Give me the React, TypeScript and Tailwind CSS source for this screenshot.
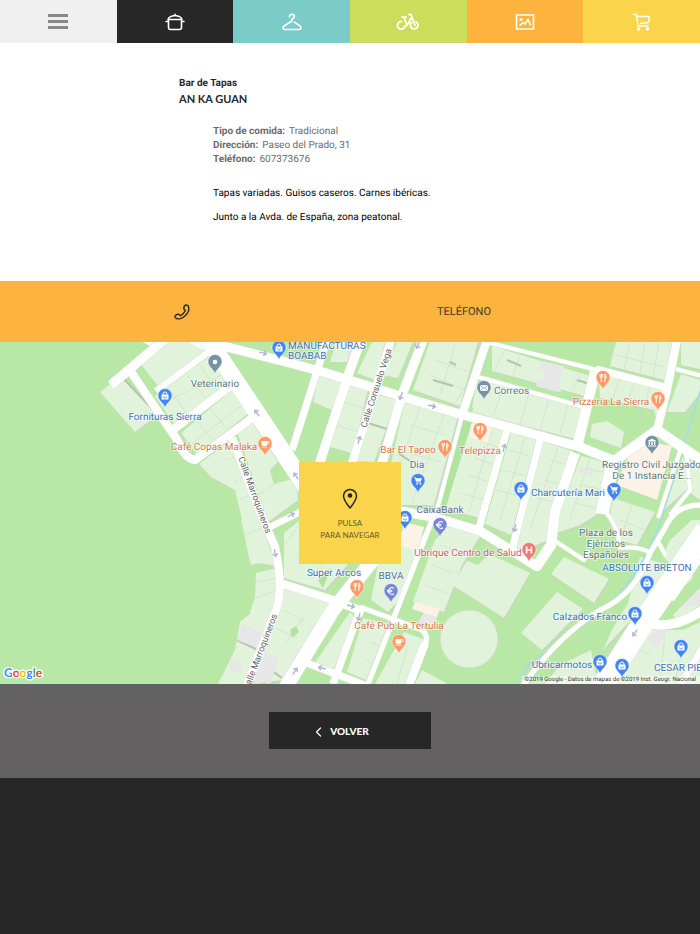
import type { ReactNode } from "react";

type Glyph = "bag" | "cup" | "fork" | "cart" | "mail" | "bank" | "euro" | "h" | "dot";

const BLUE = "#4285f4";
const ORANGE = "#ff9966";
const SLATE = "#7593a3";
const VIOLET = "#7986d8";
const RED = "#f07877";

const blocks: string[] = [
  "100,392 121,376 158,415 135,432",
  "140,363 168,342 193,342 205,352 165,384 158,386",
  "155,396 211,355 228,385 176,427",
  "181,433 232,390 249,413 197,454",
  "199,464 231,440 252,500 262,528 277,566 250,562 241,515 235,490 211,477",
  "237,431 251,421 278,462 270,470 274,484 296,478 298,500 268,522",
  "241,520 258,515 273,560 251,565",
  "256,573 277,568 279,600 262,640 250,612 255,598",
  "284,533 300,520 350,562 325,590 284,578",
  "283,588 330,603 282,680 254,684 278,612",
  "252,612 274,615 246,684 218,684 235,650 240,622",
  "319,375 346,382 332,410 313,402",
  "336,342 354,342 347,362 330,362",
  "372,342 385,342 375,380 357,373",
  "350,384 368,390 352,453 330,447",
  "370,393 397,400 374,462 355,461",
  "397,342 413,342 398,378 382,375",
  "430,342 478,342 460,406 413,390",
  "405,400 458,416 434,505 382,505",
  "492,346 597,378 592,398 492,371",
  "486,376 586,406 575,439 472,412",
  "476,386 486,384 491,410 472,408",
  "599,377 617,374 667,389 658,425 654,410 600,398",
  "616,342 672,342 665,380 610,366",
  "681,374 700,380 700,393 685,412 667,412",
  "681,342 700,342 700,369 681,365",
  "592,424 607,421 624,432 621,448 590,437",
  "472,420 504,431 483,519 445,508",
  "511,433 536,440 511,535 485,524",
  "543,442 573,451 551,512 548,540 517,553 516,540",
  "581,456 611,464 601,512 580,525 557,533 560,512",
  "613,498 655,512 637,545 618,540 610,515",
  "683,457 700,466 700,500 686,490 664,510",
  "452,521 481,535 462,565 444,612 413,602 435,540",
  "452,585 467,561 478,565 489,554 530,573 504,618",
  "404,530 425,536 399,600 388,612 371,600 381,550",
  "363,618 388,624 366,680 347,672",
  "404,632 425,640 410,684 375,684",
  "350,612 357,620 332,672 314,664",
  "551,574 564,557 609,579 594,603",
  "521,633 557,592 583,609 542,650",
  "640,557 676,567 640,610 603,650 612,630 628,603",
  "663,556 670,540 692,520 700,520 700,530 672,567",
  "560,665 591,650 598,684 545,684",
  "652,630 683,630 700,622 700,684 610,684",
  "673,615 700,588 700,605 678,621",
  "422,670 448,684 415,684",
];

const greys = [
  "243,624 262,632 257,648 237,640",
  "260,648 279,658 270,684 250,680",
  "231,659 244,665 240,672 229,669",
  "541,361 551,363 564,366 563,374 559,378 561,392 553,391 536,386 537,380 545,378 546,372 540,370",
  "424,612 437,616 434,628 418,622",
  "648,640 658,625 667,630 656,648",
  "680,608 700,588 700,604",
  "345,342 358,342 355,357 347,356",
  "579,467 593,471 593,476 578,472",
];

const beige = [
  "637,440 672,446 657,500 617,485 622,470",
  "404,522 424,527 417,551 400,546",
  "415,602 440,609 437,617 412,609",
  "471,423 492,428 488,443 470,438",
  "680,574 686,567 693,577 686,585",
];

const roads: { w: number; d: string }[] = [
  { w: 9, d: "M111 385 L165 339" },
  { w: 8, d: "M129 369 L178 441 Q184 458 195 460 L252 418" },
  { w: 8, d: "M174 429 L233 384" },
  { w: 6, d: "M156 391 L210 351" },
  { w: 17, d: "M205 335 L249 401 L318 505" },
  { w: 9, d: "M207 342 L290 363 L323 372 L400 396 L463 415 L490 422 L580 447 L615 461" },
  { w: 10, d: "M613 462 L657 430 L702 461" },
  { w: 8, d: "M657 430 L667 390 L677 340" },
  { w: 7, d: "M327 340 L292 450" },
  { w: 9, d: "M361 340 L350 370 L319 465" },
  { w: 8, d: "M391 340 L350 470" },
  { w: 9, d: "M423 340 L402 395 L380 470" },
  { w: 8, d: "M487 340 L463 412" },
  { w: 4, d: "M463 412 L437 510" },
  { w: 4, d: "M490 343 L597 370 M478 377 L587 408 M676 369 L702 376" },
  { w: 7, d: "M596 369 L668 388" },
  { w: 10, d: "M595 372 L577 447" },
  { w: 7, d: "M507 430 L479 528 M540 440 L512 550" },
  { w: 10, d: "M575 453 L555 512 L551 545 L537 566 L552 543" },
  { w: 13, d: "M613 462 L602 514" },
  { w: 9, d: "M395 510 L433 517 L480 531 L536 566" },
  { w: 5, d: "M432 520 L368 684" },
  { w: 5, d: "M360 607 L417 628 Q430 632 425 645" },
  { w: 8, d: "M425 643 L408 688" },
  { w: 8, d: "M232 438 L260 512 L275 547 Q284 590 276 610 L246 688" },
  { w: 8, d: "M280 583 L333 600 L364 612" },
  { w: 6, d: "M270 527 L300 512" },
  { w: 14, d: "M376 556 L333 610 L284 690" },
  { w: 7, d: "M360 610 L333 684 M307 663 L367 686" },
  { w: 4, d: "M681 448 L658 518 M555 541 L584 560 L588 550" },
  { w: 4, d: "M604 510 Q618 525 620 548 Q640 546 650 553" },
  { w: 5, d: "M700 505 Q675 505 665 528 L650 553 Q635 595 600 610 Q555 638 520 690" },
  { w: 22, d: "M706 530 L645 620 L600 690" },
  { w: 9, d: "M640 622 Q673 632 704 609" },
  { w: 4, d: "M700 560 L672 600 M686 450 L690 490 L670 515 M657 540 L666 556" },
  { w: 6, d: "M702 648 L681 684" },
];

const parcels =
  "M166 385 L190 418 M185 373 L211 405 M200 365 L222 397 M196 420 L219 448 M210 408 L234 438 M165 402 L222 375 M190 445 L243 404 M250 500 L284 478 M226 460 L245 454 M234 482 L250 474 M240 500 L257 492 M245 535 L264 527 M256 598 L278 590 M252 583 L277 578 M282 548 L300 524 M295 560 L320 530 M310 578 L335 550 M284 610 L306 622 M276 628 L297 638 M285 645 L303 617 M310 625 L326 634 M343 402 L363 408 M336 425 L358 432 M410 425 L445 435 M398 450 L441 462 M420 407 L395 480 M445 412 L412 503 M435 360 L469 372 M429 375 L463 389 M455 345 L440 395 M470 380 L455 403 M505 350 L493 372 M520 355 L513 376 M580 375 L572 391 M505 382 L494 414 M530 390 L520 424 M550 395 L540 430 M569 400 L560 434 M620 378 L612 400 M635 382 L626 404 M650 386 L644 407 M630 342 L624 370 M645 342 L640 374 M659 342 L653 377 M615 355 L665 367 M480 440 L499 448 M475 458 L494 465 M468 475 L489 482 M461 493 L484 500 M508 450 L530 456 M502 470 L526 476 M496 490 L520 496 M550 460 L568 465 M544 480 L562 485 M538 498 L556 503 M585 468 L607 473 M581 485 L604 490 M575 503 L600 509 M440 545 L462 554 M433 565 L455 574 M426 585 L448 594 M590 457 L570 520 M492 430 L469 512 M525 438 L500 520 M558 448 L530 530 M620 520 L645 530 M632 505 L622 535 M650 580 L665 590 M625 605 L640 615 M620 640 L650 655 M665 635 L660 680 M685 640 L675 680 M408 645 L397 684 M370 642 L385 648 M365 660 L378 666";

const arrows = [
  { x: 263, y: 353, a: 12 },
  { x: 257, y: 413, a: 235 },
  { x: 296, y: 476, a: 235 },
  { x: 418, y: 345, a: 110 },
  { x: 401, y: 396, a: 110 },
  { x: 432, y: 406, a: 15 },
  { x: 359, y: 440, a: 285 },
  { x: 504, y: 448, a: 285 },
  { x: 291, y: 515, a: 330 },
  { x: 275, y: 553, a: 80 },
  { x: 351, y: 606, a: 15 },
  { x: 359, y: 617, a: 105 },
  { x: 322, y: 668, a: 195 },
  { x: 295, y: 671, a: 305 },
  { x: 515, y: 528, a: 105 },
  { x: 635, y: 633, a: 125 },
];

const pins: { x: number; y: number; color: string; glyph: Glyph }[] = [
  { x: 215, y: 362, color: SLATE, glyph: "dot" },
  { x: 165, y: 396, color: BLUE, glyph: "bag" },
  { x: 265, y: 444, color: ORANGE, glyph: "cup" },
  { x: 279, y: 348, color: BLUE, glyph: "bag" },
  { x: 484, y: 388, color: SLATE, glyph: "mail" },
  { x: 480, y: 430, color: ORANGE, glyph: "fork" },
  { x: 445, y: 447, color: ORANGE, glyph: "fork" },
  { x: 418, y: 481, color: BLUE, glyph: "cart" },
  { x: 603, y: 378, color: ORANGE, glyph: "fork" },
  { x: 658, y: 399, color: ORANGE, glyph: "fork" },
  { x: 652, y: 443, color: SLATE, glyph: "bank" },
  { x: 521, y: 489, color: BLUE, glyph: "bag" },
  { x: 614, y: 490, color: BLUE, glyph: "cart" },
  { x: 405, y: 518, color: BLUE, glyph: "bag" },
  { x: 440, y: 525, color: VIOLET, glyph: "euro" },
  { x: 529, y: 550, color: RED, glyph: "h" },
  { x: 357, y: 587, color: ORANGE, glyph: "fork" },
  { x: 391, y: 591, color: VIOLET, glyph: "euro" },
  { x: 399, y: 642, color: ORANGE, glyph: "cup" },
  { x: 647, y: 583, color: BLUE, glyph: "bag" },
  { x: 635, y: 614, color: BLUE, glyph: "bag" },
  { x: 600, y: 662, color: BLUE, glyph: "bag" },
  { x: 622, y: 666, color: BLUE, glyph: "bag" },
  { x: 681, y: 647, color: BLUE, glyph: "bag" },
];

const SHOP = "#4273b5";
const FOOD = "#d9774f";
const PLACE = "#5b7a80";
const BANK = "#5b6ba0";

const labels: { x: number; y: number; text: string; color: string; anchor?: "start" | "middle" }[] = [
  { x: 288, y: 349, text: "MANUFACTURAS", color: SHOP, anchor: "start" },
  { x: 288, y: 359, text: "BOABAB", color: SHOP, anchor: "start" },
  { x: 215, y: 387, text: "Veterinario", color: PLACE },
  { x: 165, y: 420, text: "Fornituras Sierra", color: SHOP },
  { x: 214, y: 450, text: "Café Copas Malaka", color: FOOD },
  { x: 494, y: 394, text: "Correos", color: PLACE, anchor: "start" },
  { x: 408, y: 453, text: "Bar El Tapeo", color: FOOD },
  { x: 480, y: 454, text: "Telepizza", color: FOOD },
  { x: 417, y: 468, text: "Dia", color: SHOP },
  { x: 611, y: 405, text: "Pizzeria La Sierra", color: FOOD },
  { x: 602, y: 468, text: "Registro Civil Juzgado", color: PLACE, anchor: "start" },
  { x: 652, y: 479, text: "De 1 Instancia E...", color: PLACE },
  { x: 568, y: 496, text: "Charcutería Mari", color: SHOP },
  { x: 440, y: 513, text: "CaixaBank", color: BANK },
  { x: 468, y: 556, text: "Ubrique Centro de Salud", color: "#cc6474" },
  { x: 606, y: 536, text: "Plaza de los", color: PLACE },
  { x: 606, y: 547, text: "Ejércitos", color: PLACE },
  { x: 606, y: 558, text: "Españoles", color: PLACE },
  { x: 647, y: 571, text: "ABSOLUTE BRETON", color: SHOP },
  { x: 334, y: 576, text: "Super Arcos", color: SHOP },
  { x: 391, y: 579, text: "BBVA", color: BANK },
  { x: 399, y: 629, text: "Café Pub La Tertulia", color: FOOD },
  { x: 590, y: 620, text: "Calzados Franco", color: SHOP },
  { x: 562, y: 668, text: "Ubricarmotos", color: SHOP },
  { x: 654, y: 671, text: "CESAR PIEL", color: SHOP, anchor: "start" },
];

const glyphs: Record<Glyph, ReactNode> = {
  bag: (
    <g>
      <rect x="-3.5" y="-1.5" width="7" height="5" rx="0.5" fill="#fff" />
      <path d="M-2 -1 V-2 A2 2 0 0 1 2 -2 V-1" fill="none" stroke="#fff" />
      <path d="M-1.5 0.5 A1.5 1.5 0 0 0 1.5 0.5" fill="none" stroke={BLUE} strokeWidth="0.8" />
    </g>
  ),
  cup: (
    <g>
      <path d="M-3.5 -3 H2.5 V0 A2 2 0 0 1 .5 2 H-1.5 A2 2 0 0 1 -3.5 0Z M-3.5 2.7 H2.5 V3.6 H-3.5Z" fill="#fff" />
      <path d="M2.5 -2.5 H4 V-.5 H2.5" fill="none" stroke="#fff" strokeWidth="0.8" />
    </g>
  ),
  fork: (
    <path d="M-3 -4 V-1.5 Q-3 -.5 -1.8 -.5 Q-.6 -.5 -.6 -1.5 V-4 M-1.8 -4 V4 M1.8 4 V-4 Q3.2 -3 3 0 H1.8" fill="none" stroke="#fff" strokeWidth="1" />
  ),
  cart: (
    <g>
      <path d="M-4 -3.5 H-2.8 L-1.4 1 H3" fill="none" stroke="#fff" strokeWidth="0.9" />
      <path d="M-2.5 -2.7 H4 L2.7 .3 H-1.5Z" fill="#fff" />
      <circle cx="-1" cy="2.8" r="0.9" fill="#fff" />
      <circle cx="2.5" cy="2.8" r="0.9" fill="#fff" />
    </g>
  ),
  mail: (
    <g>
      <rect x="-4" y="-2.8" width="8" height="5.6" fill="#fff" />
      <path d="M-4 -2.5 L0 .3 L4 -2.5 M-4 2.8 L-1 -.2 M4 2.8 L1 -.2" fill="none" stroke={SLATE} strokeWidth="0.7" />
    </g>
  ),
  bank: (
    <path d="M-4 -1.5 V-2.3 L0 -4.2 L4 -2.3 V-1.5Z M-3.3 -1 H-2 V2 H-3.3Z M-.7 -1 H.7 V2 H-.7Z M2 -1 H3.3 V2 H2Z M-4 2.4 H4 V3.6 H-4Z" fill="#fff" />
  ),
  euro: <path d="M3 -2.8 A3.4 3.4 0 1 0 3 2.8 M-4 -.8 H1.4 M-4 .8 H1.2" fill="none" stroke="#fff" strokeWidth="1.1" />,
  h: <path d="M-2.4 -3.4 V3.4 M2.4 -3.4 V3.4 M-2.4 0 H2.4" fill="none" stroke="#fff" strokeWidth="1.6" />,
  dot: <circle r="2.3" fill="#fff" />,
};

function StreetMap() {
  return (
    <svg
      viewBox="0 342 700 342"
      preserveAspectRatio="xMidYMid slice"
      className="block h-[342px] w-full"
      role="img"
      aria-label="Mapa de Ubrique"
      fontFamily='Roboto, "Liberation Sans", sans-serif'
      textRendering="geometricPrecision"
    >
      <rect x="-20" y="330" width="740" height="370" fill="#b9e8a6" />
      <g fill="#c5d9bd" transform="translate(1 1.5)">
        {blocks.map((points) => (
          <polygon key={points} points={points} />
        ))}
      </g>
      <g fill="#e1f3db">
        {blocks.map((points) => (
          <polygon key={points} points={points} />
        ))}
      </g>
      <circle cx="469" cy="639" r="29" fill="#e1f3db" stroke="#cde0c5" />
      <path d={parcels} stroke="#cfe3c8" strokeWidth="0.8" fill="none" />
      <path
        d="M121 376 L158 415 M433 380 L453 386 M450 362 L456 365 M507 360 L521 366 M577 380 L596 386 M398 453 L410 461 M368 423 L387 429 M237 640 L256 649 M301 653 L313 662 M272 671 L282 678"
        stroke="#b3c3ad"
        strokeWidth="2"
        fill="none"
      />
      <g fill="#e7e7e7">
        {greys.map((points) => (
          <polygon key={points} points={points} />
        ))}
      </g>
      <g fill="#fdf2e7">
        {beige.map((points) => (
          <polygon key={points} points={points} />
        ))}
      </g>
      <path d="M463 418 L472 422 L446 507 L436 507Z M318 580 L331 568 L323 588Z M290 630 L296 626 L299 632 L292 638Z" fill="#b0e39c" />
      <path d="M702 385 L664 510 Q648 562 617 597 L577 630 L530 664 L512 690" stroke="#a2daf2" strokeWidth="1.5" fill="none" />
      <path d="M139 340 L168 340 L158 350Z M185 340 L207 340 L207 352Z" fill="#fff" />
      <g fill="none" stroke="#dbe3d8" strokeLinejoin="round">
        {roads.map((road) => (
          <path key={road.d} d={road.d} strokeWidth={road.w + 1} />
        ))}
      </g>
      <g fill="none" stroke="#fff" strokeLinejoin="round">
        {roads.map((road) => (
          <path key={road.d} d={road.d} strokeWidth={road.w} />
        ))}
      </g>
      <g fill="none" stroke="#aeb6d2" strokeWidth="1.4">
        {arrows.map((arrow) => (
          <path key={`${arrow.x}-${arrow.y}`} d="M-4 0 H3 M0.5 -2.5 L3.5 0 L0.5 2.5" transform={`translate(${arrow.x} ${arrow.y}) rotate(${arrow.a})`} />
        ))}
      </g>

      <g fontSize="9" fill="#646464" stroke="#fff" strokeWidth="2" paintOrder="stroke" textAnchor="middle">
        <text transform="translate(379 389) rotate(-72)">Calle Consuelo Vega</text>
        <text transform="translate(252 496) rotate(70)">Calle Marroquineros</text>
        <text transform="translate(263 653) rotate(-69)">Calle Marroquineros</text>
      </g>

      {pins.map((pin) => (
        <g key={`${pin.x}-${pin.y}`} transform={`translate(${pin.x} ${pin.y})`}>
          <path d="M0 12 C-1 7 -7 5 -7 -.5 A7 7 0 0 1 7 -.5 C7 5 1 7 0 12Z" fill={pin.color} stroke="#fff" strokeWidth="0.5" />
          {glyphs[pin.glyph]}
        </g>
      ))}

      <g fontSize="10" stroke="#fff" strokeOpacity="0.6" strokeWidth="2" strokeLinejoin="round" paintOrder="stroke">
        {labels.map((label) => (
          <text key={label.text} x={label.x} y={label.y} fill={label.color} textAnchor={label.anchor ?? "middle"}>
            {label.text}
          </text>
        ))}
      </g>
    </svg>
  );
}

const iconProps = { fill: "none", stroke: "currentColor", strokeLinecap: "round", strokeLinejoin: "round" } as const;

const sections: { name: string; style: string; icon: ReactNode }[] = [
  {
    name: "Comer",
    style: "bg-[#272727]",
    icon: (
      <svg viewBox="0 0 20 18" className="h-[18px] w-5" strokeWidth="1.6" {...iconProps}>
        <path d="M3 6.500 Q4 3 10 2.500 Q16 3 17 6.500 Z M10 2.500 V1.200 M1 8.500 H3.500 M16.500 8.500 H19 M3.500 7 V14.500 Q3.500 16.500 5.500 16.500 H14.500 Q16.500 16.500 16.500 14.500 V7" />
      </svg>
    ),
  },
  {
    name: "Moda",
    style: "bg-[#7bccc8]",
    icon: (
      <svg viewBox="0 0 20 18" className="h-[18px] w-5" strokeWidth="1.6" {...iconProps}>
        <path d="M7.500 4 Q7.300 1.200 10 1.200 Q12.500 1.400 12.300 3.500 Q12 5 10 6 V8 L1.800 13.200 Q.5 14.500 1.300 15.800 Q1.800 16.500 3 16.500 H17 Q18.200 16.500 18.700 15.800 Q19.500 14.500 18.200 13.200 L12.500 9.200" />
      </svg>
    ),
  },
  {
    name: "Deporte",
    style: "bg-[#cbdd5a]",
    icon: (
      <svg viewBox="0 0 24 18" className="h-[18px] w-6" strokeWidth="1.8" {...iconProps}>
        <path d="M5.500 8.500 A3.800 3.800 0 1 0 9 13 M15.500 9.500 A3.800 3.800 0 1 0 20 8.800 M8 4 L11 12.500 L15.500 4.500 M6 4 H10 M13 1.500 H15 L19 12.500" />
      </svg>
    ),
  },
  {
    name: "Fotos",
    style: "bg-[#fcb43f]",
    icon: (
      <svg viewBox="0 0 20 18" className="h-[18px] w-5" fill="none" stroke="currentColor" strokeWidth="1.6">
        <path d="M1.500 2 H18.500 V16 H1.500Z M4.500 12.500 L8.500 9.500 L10 11 L13 6.500 L15.500 12.500" />
        <circle cx="6" cy="6.500" r="1.600" fill="currentColor" stroke="none" />
      </svg>
    ),
  },
  {
    name: "Compras",
    style: "bg-[#fad44b]",
    icon: (
      <svg viewBox="0 0 20 18" className="h-[18px] w-5" strokeWidth="1.4" {...iconProps}>
        <path d="M1.500 1.500 H4.500 L6 13 H16 M5 3.500 H17.500 L16.500 9.500 L8.500 10.500" />
        <circle cx="6.500" cy="16" r="1.100" fill="currentColor" />
        <circle cx="15.500" cy="16" r="1.100" fill="currentColor" />
      </svg>
    ),
  },
];

function TopNav() {
  return (
    <nav className="grid h-[43px] grid-cols-6 text-white">
      <button type="button" aria-label="Menú" className="flex items-center justify-center bg-[#f0f0f0]">
        <svg viewBox="0 0 20 16" className="h-4 w-5" fill="#888">
          <path d="M0 0 H20 V3 H0Z M0 6 H20 V9 H0Z M0 12 H20 V15 H0Z" />
        </svg>
      </button>
      {sections.map((section) => (
        <a key={section.name} href="#" aria-label={section.name} className={`flex items-center justify-center ${section.style}`}>
          {section.icon}
        </a>
      ))}
    </nav>
  );
}

const details = [
  { term: "Tipo de comida:", value: "Tradicional" },
  { term: "Dirección:", value: "Paseo del Prado, 31" },
  { term: "Teléfono:", value: "607373676" },
];

function GoogleLogo() {
  return (
    <svg viewBox="0 0 44 18" className="absolute bottom-[2px] left-[2px] h-[18px] w-[44px]" role="img" aria-label="Google">
      <text x="2" y="13" fontFamily="Lato, sans-serif" fontSize="12" fontWeight="700" stroke="#fff" strokeWidth="2.500" strokeLinejoin="round" paintOrder="stroke">
        <tspan fill="#4285f4">G</tspan>
        <tspan fill="#ea4335">o</tspan>
        <tspan fill="#fbbc05">o</tspan>
        <tspan fill="#4285f4">g</tspan>
        <tspan fill="#34a853">l</tspan>
        <tspan fill="#ea4335">e</tspan>
      </text>
    </svg>
  );
}

export default function App() {
  return (
    <div className="min-h-screen bg-[#272727] font-['Roboto','Liberation_Sans',sans-serif] text-[10px] text-[#272727] [text-rendering:geometricPrecision]">
      <TopNav />

      <main>
        <article className="bg-white pt-[34px] pb-[56px]">
          <div className="mx-auto max-w-[342px]">
            <p className="font-bold leading-[14px]">Bar de Tapas</p>
            <h1 className="font-['Lato',sans-serif] text-[11px] font-bold leading-[18px]">AN KA GUAN</h1>

            <div className="pl-[34px]">
              <dl className="mt-4 text-[#6b6b6b]">
                {details.map((detail) => (
                  <div key={detail.term} className="flex gap-1 leading-[14px]">
                    <dt className="font-bold">{detail.term}</dt>
                    <dd>{detail.value}</dd>
                  </div>
                ))}
              </dl>
              <p className="mt-5 leading-[14px] text-black">Tapas variadas. Guisos caseros. Carnes ibéricas.</p>
              <p className="mt-[10px] leading-[14px] text-black">Junto a la Avda. de España, zona peatonal.</p>
            </div>
          </div>
        </article>

        <a href="tel:607373676" className="grid h-[61px] grid-cols-2 items-center justify-items-center bg-[#fcb43f] pr-[95px] pl-[41px]">
          <svg viewBox="0 0 16 16" className="h-4 w-4" strokeWidth="1.4" aria-hidden="true" {...iconProps}>
            <path d="M10.500 1.700 Q12 .5 13.500 1.300 Q15.500 3 14.500 7 Q12 13 6 14.700 Q2.500 15.500 1.200 13.300 Q.5 12 2 11 L4 10.200 Q5 10 5.500 11 Q6 12 7 11.300 Q10 9.500 11 7 Q11.500 6 10.500 5.500 Q9.500 5 9.800 4Z" />
          </svg>
          <span className="text-[11px] leading-[14px] text-[#3b3833]">TELÉFONO</span>
        </a>

        <section className="relative overflow-hidden">
          <StreetMap />
          <GoogleLogo />
          <p className="absolute right-0 bottom-0 bg-white/40 px-1 text-[6px] leading-[8px] text-[#333]">
            ©2019 Google - Datos de mapas de ©2019 Inst. Geogr. Nacional
          </p>
          <div className="absolute inset-0 flex items-center justify-center">
            <button type="button" className="flex h-[102px] w-[102px] flex-col items-center bg-[#fad44b] pt-[26px]">
              <svg viewBox="0 0 16 22" className="h-[22px] w-4" strokeWidth="1.5" aria-hidden="true" {...iconProps}>
                <path d="M8 20 Q1.500 12 1.500 8 A6.500 6.500 0 0 1 14.500 8 Q14.500 12 8 20Z" />
                <circle cx="8" cy="7.500" r="1.600" fill="currentColor" />
              </svg>
              <span className="mt-[7px] font-['Lato',sans-serif] text-[8px] leading-[12px] text-[#685b30]">
                PULSA
                <br />
                PARA NAVEGAR
              </span>
            </button>
          </div>
        </section>

        <div className="flex justify-center bg-[#636162] pt-7 pb-[29px]">
          <button type="button" className="flex h-[37px] w-[162px] items-center justify-center gap-2 bg-[#272727] pt-[2px] pr-4 font-['Lato',sans-serif] text-[10px] font-black text-white">
            <svg viewBox="0 0 7 10" className="h-[10px] w-[7px]" strokeWidth="1.2" aria-hidden="true" {...iconProps}>
              <path d="M5.500 1 L1.500 5 L5.500 9" />
            </svg>
            VOLVER
          </button>
        </div>
      </main>
    </div>
  );
}
